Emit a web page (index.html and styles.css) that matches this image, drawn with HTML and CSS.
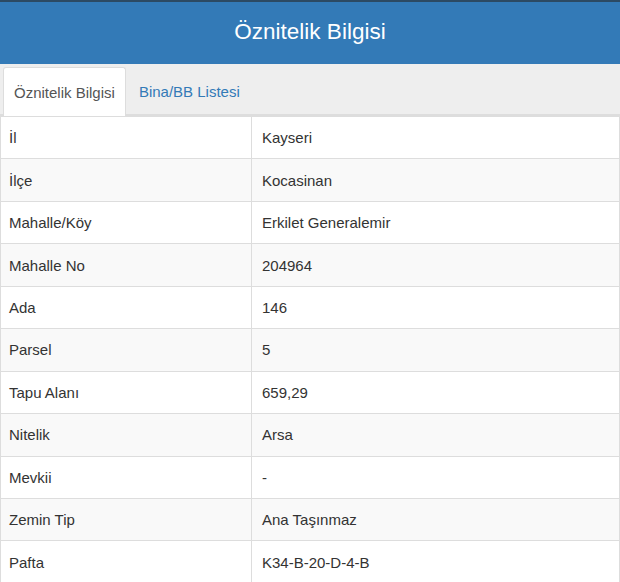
FILE: index.html
```html
<!DOCTYPE html>
<html lang="tr">
<head>
  <meta charset="UTF-8" />
  <meta name="viewport" content="width=device-width, initial-scale=1.0"/>
  <title>Öznitelik Bilgisi</title>
  <link rel="stylesheet" href="styles.css">
</head>
<body>

  <div class="panel-header">
    <h1>Öznitelik Bilgisi</h1>
  </div>

  <ul class="nav-tabs">
    <li class="tab active"><a href="#attr">Öznitelik Bilgisi</a></li>
    <li class="tab"><a href="#bina">Bina/BB Listesi</a></li>
  </ul>

  <table class="attr-table" id="attr">
    <tbody>
      <tr><td>İl</td><td>Kayseri</td></tr>
      <tr><td>İlçe</td><td>Kocasinan</td></tr>
      <tr><td>Mahalle/Köy</td><td>Erkilet Generalemir</td></tr>
      <tr><td>Mahalle No</td><td>204964</td></tr>
      <tr><td>Ada</td><td>146</td></tr>
      <tr><td>Parsel</td><td>5</td></tr>
      <tr><td>Tapu Alanı</td><td>659,29</td></tr>
      <tr><td>Nitelik</td><td>Arsa</td></tr>
      <tr><td>Mevkii</td><td>-</td></tr>
      <tr><td>Zemin Tip</td><td>Ana Taşınmaz</td></tr>
      <tr><td>Pafta</td><td>K34-B-20-D-4-B</td></tr>
    </tbody>
  </table>

</body>
</html>
```

FILE: styles.css
```css
body {
  font-family: 'Liberation Sans', Arial, sans-serif;
  font-size: 15px;
  color: #333;
  margin: 0;
  padding: 0;
  background: #fff;
  overflow: hidden;
}

.panel-header {
  background-color: #337ab7;
  border-top: 2px solid #2c4a63;
  height: 62px;
  display: flex;
  justify-content: center;
  align-items: center;
}

.panel-header h1 {
  margin: 0;
  font-size: 22.5px;
  font-weight: normal;
  color: #fff;
  padding-bottom: 2px;
}

.nav-tabs {
  list-style: none;
  margin: 0;
  padding: 3px 0 0 3px;
  background-color: #eee;
  border-bottom: 2px solid #ddd;
  display: flex;
  height: 47px;
}

.tab {
  margin-right: 2px;
  margin-bottom: -2px;
}

.tab a {
  display: flex;
  align-items: center;
  height: 47px;
  padding: 0 10px;
  color: #337ab7;
  text-decoration: none;
  border: 1px solid transparent;
  border-bottom: none;
  border-radius: 3px 3px 0 0;
}

.tab.active a {
  background-color: #fff;
  color: #555;
  border-color: #ddd;
  height: 48px;
}

.attr-table {
  width: 100%;
  border-collapse: collapse;
  border: 1px solid #ddd;
  border-top: none;
}

.attr-table td {
  height: 42.45px;
  padding: 0 8px;
  border-top: 1px solid #ddd;
  vertical-align: middle;
  box-sizing: border-box;
}

.attr-table td:first-child {
  width: 251px;
  border-right: 1px solid #ddd;
}

.attr-table td:last-child {
  padding-left: 10px;
}

.attr-table tr:nth-child(even) td {
  background-color: #f9f9f9;
}
```
